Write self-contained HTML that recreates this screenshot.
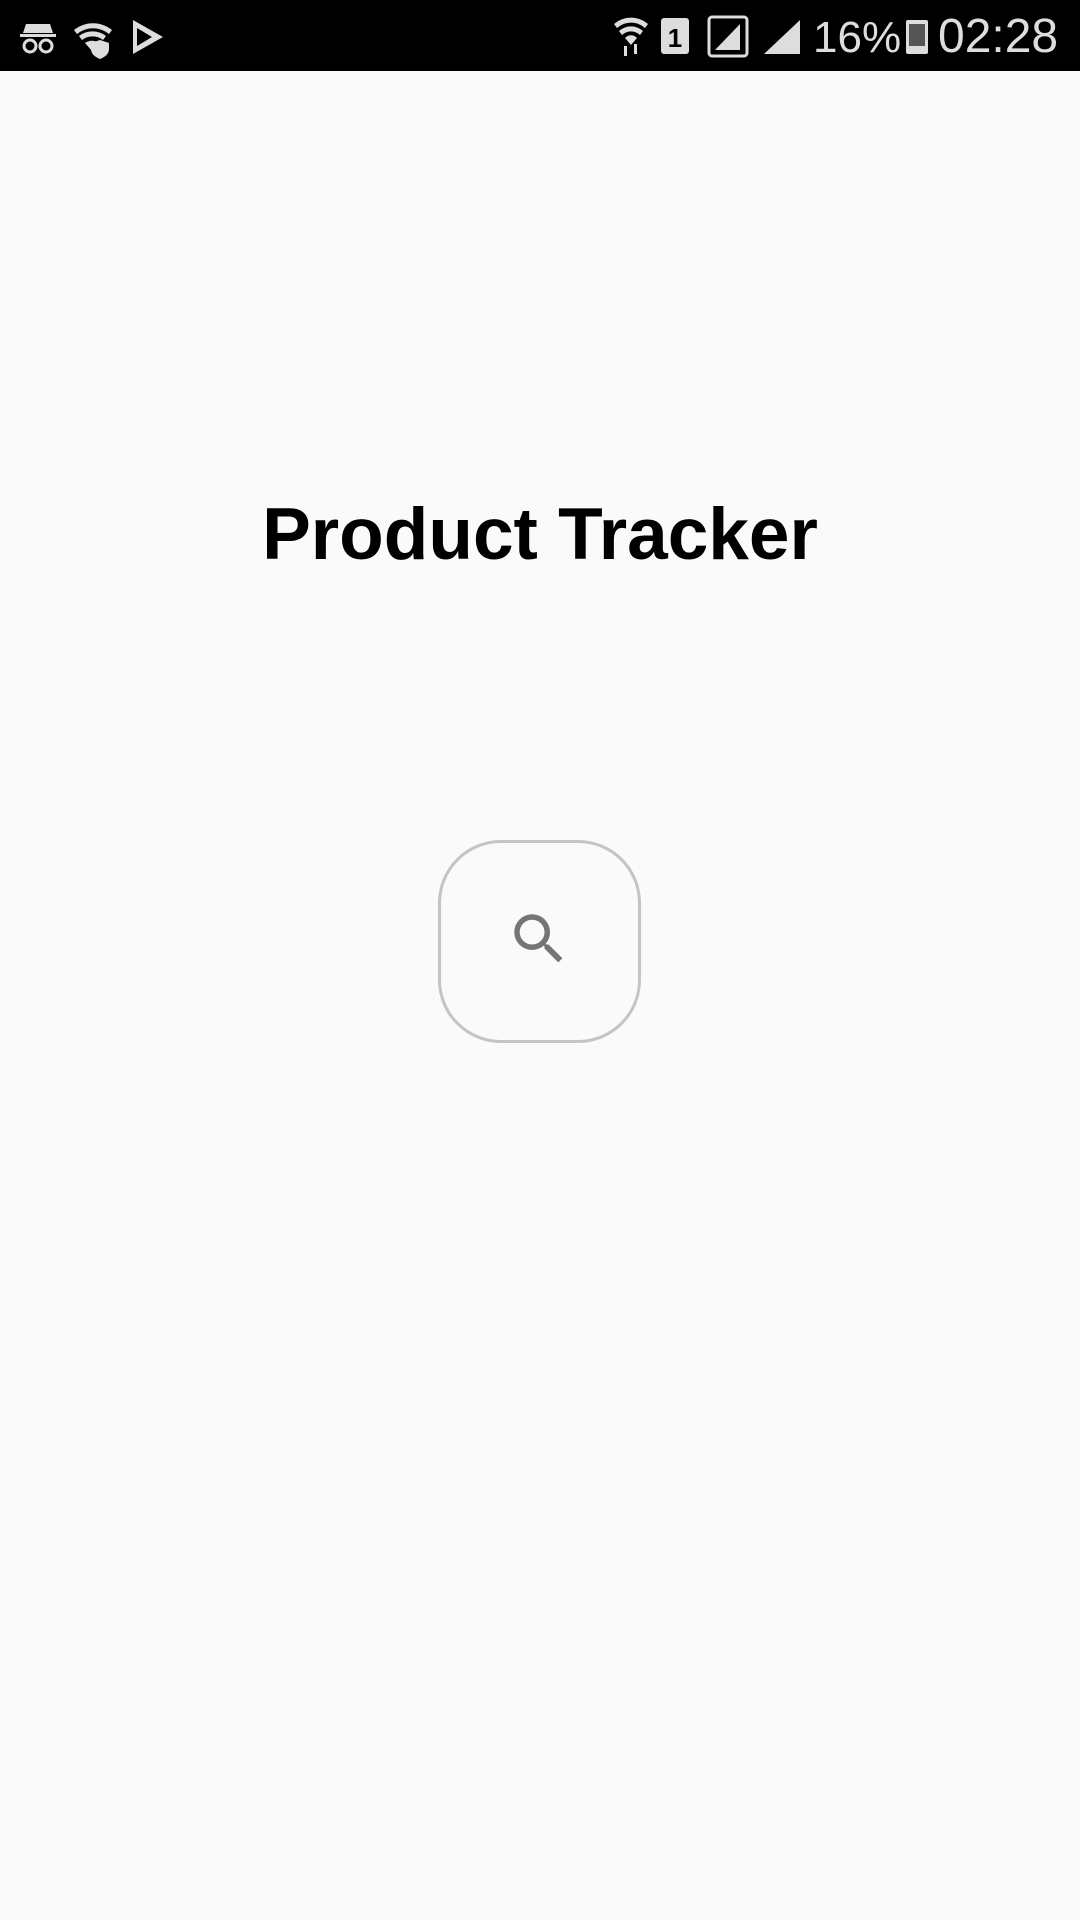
<!DOCTYPE html>
<html><head><meta charset="utf-8"><style>
html,body{margin:0;padding:0;width:1080px;height:1920px;background:#fafafa;overflow:hidden;font-family:"Liberation Sans",sans-serif}
.sb{position:absolute;left:0;top:0;width:1080px;height:71px;background:#000;color:#ddd}
.title{position:absolute;left:0;width:1080px;top:490px;text-align:center;font-weight:bold;font-size:73px;color:#000;line-height:90px}
.btn{position:absolute;left:438px;top:840px;width:203px;height:203px;border:3px solid #c4c4c4;border-radius:63px;box-sizing:border-box}
</style></head><body>
<div class="sb">
<svg width="1080" height="71" style="position:absolute;left:0;top:0" fill="#ddd" stroke="none">
 <path d="M26 24h24l3 9H23z"/><rect x="20" y="34" width="36" height="3"/>
 <circle cx="30" cy="46" r="6" fill="none" stroke="#ddd" stroke-width="3"/><circle cx="46" cy="46" r="6" fill="none" stroke="#ddd" stroke-width="3"/>
 <path d="M74 30a30 30 0 0 1 38 0l-3 4a25 25 0 0 0-32 0z"/><path d="M79 36a22 22 0 0 1 27 0l-3 4a17 17 0 0 0-21 0z"/><path d="M85 43a12 12 0 0 1 14 0l-7 8z"/>
 <path d="M100 40l9 3v6c0 5-4 8-9 10c-5-2-9-5-9-10v-6z"/>
 <path d="M133 20l30 17l-30 17z M137 28v18l15-9z" fill-rule="evenodd"/>
 <path d="M614 24a26 26 0 0 1 34 0l-3 4a21 21 0 0 0-28 0z"/><path d="M619 31a18 18 0 0 1 24 0l-3 4a13 13 0 0 0-18 0z"/><path d="M625 38a8 8 0 0 1 12 0l-6 7z"/>
 <rect x="624" y="46" width="3" height="10"/><rect x="634" y="44" width="3" height="10"/>
 <rect x="661" y="18" width="28" height="36" rx="3"/>
 <text x="675" y="47" font-size="26" font-weight="bold" text-anchor="middle" fill="#000" font-family="Liberation Sans">1</text>
 <rect x="709" y="17" width="38" height="39" rx="3" fill="none" stroke="#ddd" stroke-width="3"/>
 <path d="M740 24v26h-25z"/>
 <path d="M800 20v34h-36z"/>
 <text x="813" y="52" font-size="44" font-family="Liberation Sans" fill="#ddd">16%</text>
 <rect x="906" y="20" width="22" height="34" rx="2"/>
 <rect x="909" y="24" width="16" height="22" fill="#555"/>
 <text x="938" y="52" font-size="48" font-family="Liberation Sans" fill="#ddd">02:28</text>
</svg>
</div>
<div class="title">Product Tracker</div>
<div class="btn"></div>
<svg width="66" height="66" viewBox="0 0 24 24" style="position:absolute;left:506px;top:906px"><path fill="#757575" d="M15.5 14h-.79l-.28-.27A6.47 6.470 0 0 0 16 9.5 6.5 6.5 0 1 0 9.5 16c1.61 0 3.09-.59 4.230-1.57l.27.28v.79l5 4.99L20.49 19l-4.99-5zm-6 0C7.01 14 5 11.990 5 9.5S7.01 5 9.5 5 14 7.01 14 9.5 11.99 14 9.5 14z"/></svg>
</body></html>
